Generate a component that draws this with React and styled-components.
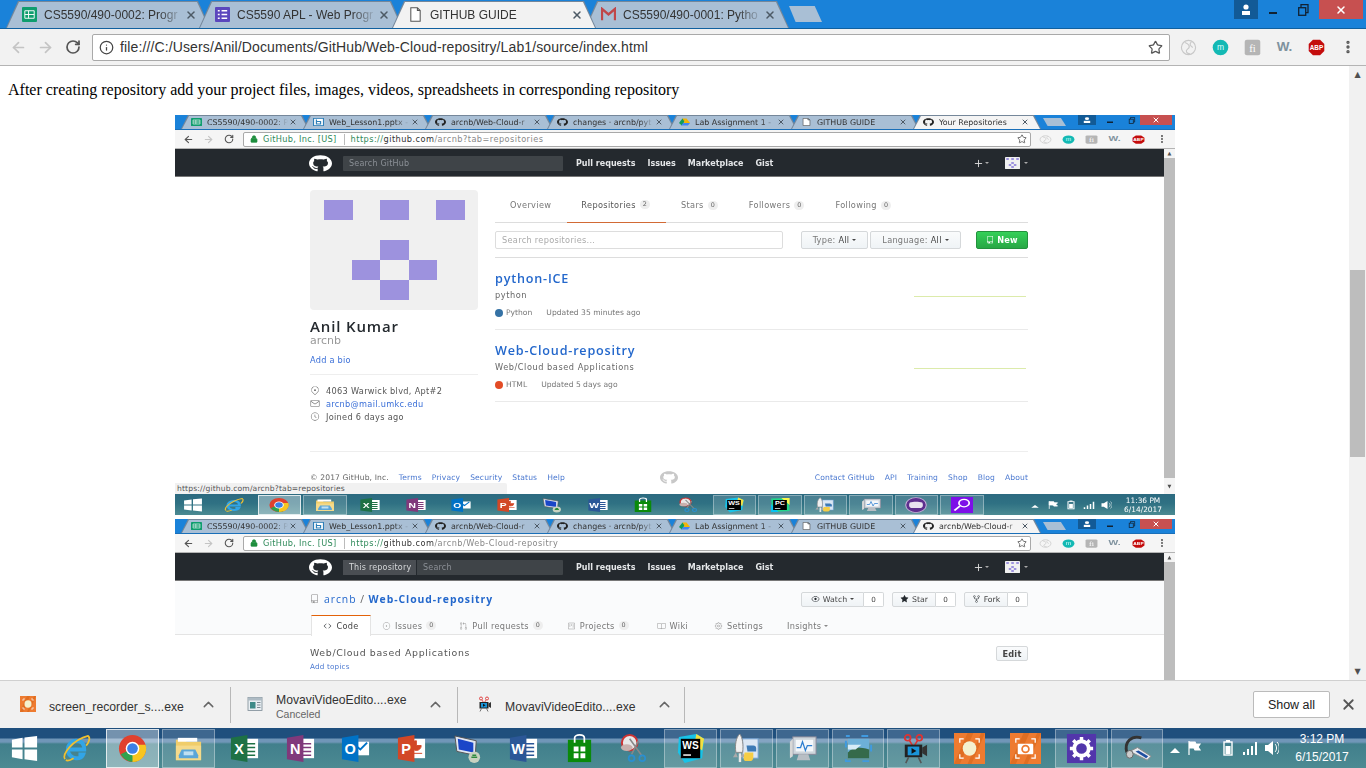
import React from "react";
import styled, { createGlobalStyle, css } from "styled-components";
import { ArrowLeft, ArrowRight, RotateCw, Info, Star, Lock, X, ChevronUp, EllipsisVertical, Plus } from "lucide-react";
import { FaGithub } from "react-icons/fa";
import {
  GoLocation, GoMail, GoClock, GoEye, GoStarFill, GoRepoForked, GoCode, GoIssueOpened,
  GoGitPullRequest, GoProject, GoBook, GoGear, GoRepo,
} from "react-icons/go";

const GlobalStyle = createGlobalStyle`
  html, body { margin: 0; padding: 0; background: #fff; overflow: hidden; }
  * { box-sizing: border-box; }
`;

const UI_FONT = `"Liberation Sans", Arial, sans-serif`;
const MINI_FONT = `"DejaVu Sans", "Open Sans", sans-serif`;

const Screen = styled.div`
  width: 1366px;
  height: 768px;
  display: flex;
  flex-direction: column;
  overflow: hidden;
  font-family: ${UI_FONT};
`;

/* ---------- browser chrome, shared by the real window and the two screenshots ---------- */

const TabStrip = styled.div`
  display: flex;
  align-items: flex-end;
  flex: none;
  background: #1a82d9;
  height: ${p => (p.$mini ? 15 : 29)}px;
  padding-left: 6px;
  border-bottom: 1px solid ${p => (p.$mini ? "#1a6fb8" : "#10609f")};
`;

const TabShape = styled.div`
  position: relative;
  flex: none;
  display: flex;
  align-items: center;
  width: ${p => (p.$mini ? 128 : 204)}px;
  height: ${p => (p.$mini ? 14 : 27)}px;
  margin-right: ${p => (p.$mini ? -6 : -11)}px;
  padding-left: ${p => (p.$mini ? 10 : 15)}px;
  background: #75879a;
  z-index: ${p => (p.$active ? 2 : 1)};
  clip-path: polygon(0 100%, ${p => (p.$mini ? 7 : 12)}px 0, calc(100% - ${p => (p.$mini ? 7 : 12)}px) 0, 100% 100%);
  &::before {
    content: "";
    position: absolute;
    inset: 1px 1px 0 1px;
    background: ${p => (p.$active ? (p.$mini ? "#f4f4f4" : "#f2f2f2") : "#a9bfd5")};
    clip-path: polygon(0 100%, ${p => (p.$mini ? 7 : 12)}px 0, calc(100% - ${p => (p.$mini ? 7 : 12)}px) 0, 100% 100%);
  }
  & > * { position: relative; }
`;

const TabIcon = styled.span`
  display: flex;
  justify-content: center;
  flex: none;
  width: ${p => (p.$mini ? 11 : 16)}px;
  margin-right: ${p => (p.$mini ? 5 : 7)}px;
`;

const TabTitle = styled.span`
  flex: none;
  width: ${p => (p.$mini ? 81 : 140)}px;
  white-space: nowrap;
  color: #333;
  font-family: ${p => (p.$mini ? MINI_FONT : UI_FONT)};
  font-size: ${p => (p.$mini ? 7.9 : 12)}px;
  -webkit-mask-image: linear-gradient(90deg, #000 82%, transparent 100%);
  mask-image: linear-gradient(90deg, #000 82%, transparent 100%);
`;

const TabClose = styled(X)`
  flex: none;
  color: #4d5a66;
  margin-left: ${p => (p.$mini ? 1 : 1)}px;
  stroke-width: 3;
`;

const NewTab = styled.div`
  flex: none;
  align-self: center;
  width: ${p => (p.$mini ? 23 : 33)}px;
  height: ${p => (p.$mini ? 8 : 16)}px;
  margin-left: ${p => (p.$mini ? 8 : 11)}px;
  background: #a9bfd5;
  clip-path: polygon(0 0, 78% 0, 100% 100%, 20% 100%);
`;

const WindowControls = styled.div`
  display: flex;
  align-self: flex-start;
  margin-left: auto;
  padding-right: 3px;
  height: ${p => (p.$mini ? 10 : 19)}px;
`;

const WinBtn = styled.div`
  display: flex;
  align-items: center;
  justify-content: center;
  width: ${p => p.$w}px;
  color: #fff;
  background: ${p => p.$bg || "transparent"};
`;

const Toolbar = styled.div`
  display: flex;
  align-items: center;
  flex: none;
  background: ${p => (p.$mini ? "#f5f5f5" : "#f2f2f2")};
  height: ${p => (p.$mini ? 19 : 37)}px;
  padding-left: ${p => (p.$mini ? 3 : 5)}px;
  border-bottom: 1px solid #b4b4b4;
`;

const NavBtn = styled.div`
  flex: none;
  display: flex;
  justify-content: center;
  width: ${p => (p.$mini ? 20.5 : 27)}px;
  color: ${p => (p.$off ? "#c4c4c4" : "#555")};
`;

const Omnibox = styled.div`
  display: flex;
  align-items: center;
  flex: none;
  background: #fff;
  border: 1px solid #a9a9a9;
  border-radius: 2px;
  width: ${p => (p.$mini ? 788 : 1078)}px;
  height: ${p => (p.$mini ? 15 : 27)}px;
  margin-left: ${p => (p.$mini ? 3.5 : 6)}px;
  margin-right: ${p => (p.$mini ? 2.4 : 2)}px;
  padding: 0 ${p => (p.$mini ? 3 : 6)}px 0 6px;
`;

const PageAddress = styled.span`
  margin-left: 6px;
  font-size: 14px;
  letter-spacing: .125px;
  color: #333;
`;

const SecureLabel = styled.span`
  font-family: ${MINI_FONT};
  font-size: 8.2px;
  letter-spacing: .3px;
  color: #2f8a5a;
  margin-left: 5px;
  padding-right: 7px;
  border-right: 1px solid #bbb;
  line-height: 11px;
`;

const MiniUrl = styled.span`
  font-family: ${MINI_FONT};
  font-size: 8.2px;
  letter-spacing: .45px;
  color: #888;
  margin-left: 6px;
  b { font-weight: 400; color: #333; }
  i { font-style: normal; color: #2f8a5a; }
`;

const OmniStar = styled(Star)`
  margin-left: auto;
  color: #555;
`;

const ExtSlot = styled.div`
  flex: none;
  display: flex;
  justify-content: center;
  width: ${p => (p.$mini ? 23.3 : 32)}px;
`;

const ExtIcon = styled.svg`
  display: block;
  width: ${p => (p.$mini ? 13 : 17)}px;
  height: ${p => (p.$mini ? 9 : 17)}px;
`;

const EXT_ICONS = [
  <g key="s" fill="none" stroke="#c8c8c8" strokeWidth="1.6"><circle cx="12" cy="12" r="10" /><path d="M7 5c6 2 8 6 4 9s-2 6 3 7M16 4c-3 3-2 5 2 8" /></g>,
  <g key="m"><circle cx="12" cy="12" r="11" fill="#13b9b4" /><text x="12" y="16" textAnchor="middle" fontSize="12" fill="#dff" fontFamily="Liberation Sans">m</text></g>,
  <g key="f"><rect x="1" y="1" width="22" height="22" rx="3" fill="#b5b5b5" /><text x="12" y="18" textAnchor="middle" fontSize="15" fill="#fff" fontFamily="Liberation Serif">fi</text></g>,
  <text key="w" x="12" y="17" textAnchor="middle" fontSize="19" fontWeight="700" fill="#7f929e" fontFamily="Liberation Sans">W.</text>,
  <g key="a"><polygon points="7,1 17,1 23,7 23,17 17,23 7,23 1,17 1,7" fill="#c40c0c" /><text x="12" y="15.5" textAnchor="middle" fontSize="9" fontWeight="700" fill="#fff" fontFamily="Liberation Sans">ABP</text></g>,
];

const Tab = ({ mini, active, icon, title }) => (
  <TabShape $mini={mini} $active={active}>
    <TabIcon $mini={mini}><TabGlyph name={icon} mini={mini} /></TabIcon>
    <TabTitle $mini={mini}>{title}</TabTitle>
    <TabClose $mini={mini} size={mini ? 8 : 12} />
  </TabShape>
);

const GlyphSvg = styled.svg`
  display: block;
  width: ${p => (p.$mini ? 11 : 15)}px;
  height: ${p => (p.$mini ? 8 : 15)}px;
`;

const TabGlyph = ({ name, mini }) => {
  if (name === "github") return <MiniMark $mini />;
  return (
    <GlyphSvg $mini={mini} viewBox="0 0 16 16" preserveAspectRatio="none">
      {name === "sheets" && <><rect width="16" height="16" rx="1" fill="#0f9d6e" /><path d="M3 4h10v8H3zM3 8h10M7 4v8" fill="none" stroke="#fff" /></>}
      {name === "forms" && <><rect width="16" height="16" rx="1" fill="#5b47bd" /><path d="M3 4h2M3 8h2M3 12h2M7 4h6M7 8h6M7 12h6" stroke="#fff" strokeWidth="1.6" /></>}
      {name === "doc" && <path d="M3 .8h7l3 3v11.4H3zM10 .8v3h3" fill="#fff" stroke="#555" strokeWidth="1.1" />}
      {name === "gmail" && <path d="M1 14V2l7 6 7-6v12" fill="none" stroke="#c0474a" strokeWidth="2.6" />}
      {name === "lesson" && <><rect x=".8" y=".8" width="14.4" height="14.4" fill="#fff" stroke="#2f7fb8" strokeWidth="1.6" /><path d="M5 3v9h6V7H5" fill="none" stroke="#2f7fb8" strokeWidth="1.8" /></>}
      {name === "drive" && <><polygon points="5,1 11,1 8,7 5,7" fill="#f4b400" /><polygon points="5,1 8,7 4,15 0,10" fill="#0f9d58" /><polygon points="11,1 16,10 7,10 8,7" fill="#f4b400" /><polygon points="3,15 6,10 16,10 13,15" fill="#4285f4" /></>}
    </GlyphSvg>
  );
};

const Chrome = ({ mini, tabs, address }) => (
  <>
    <TabStrip $mini={mini}>
      {tabs.map(t => <Tab key={t.title + t.icon} mini={mini} {...t} />)}
      <NewTab $mini={mini} />
      <WindowControls $mini={mini}>
        <WinBtn $w={mini ? 18 : 24} $bg="#125a96">
          <svg width={mini ? 8 : 10} height={mini ? 6 : 11} viewBox="0 0 10 11" preserveAspectRatio="none"><circle cx="5" cy="3" r="2.6" fill="#fff" /><rect x="1" y="7" width="8" height="4" fill="#fff" /></svg>
        </WinBtn>
        <WinBtn $w={mini ? 28 : 30}>
          <svg width={mini ? 6 : 8} height="10" viewBox="0 0 8 10"><rect y="7" width="8" height="2" fill="#123" /></svg>
        </WinBtn>
        <WinBtn $w={mini ? 16 : 31}>
          <svg width={mini ? 8 : 11} height={mini ? 7 : 12} viewBox="0 0 11 12" fill="none" stroke="#123" strokeWidth="1.3"><rect x=".7" y="3.7" width="7" height="7.6" /><path d="M3 3.5V.7h7v8H8" /></svg>
        </WinBtn>
        <WinBtn $w={mini ? 32 : 44} $bg="#c75050"><X size={mini ? 8 : 12} strokeWidth={3} /></WinBtn>
      </WindowControls>
    </TabStrip>
    <Toolbar $mini={mini}>
      <NavBtn $mini={mini} $off={!mini}><ArrowLeft size={mini ? 11 : 17} strokeWidth={2.4} /></NavBtn>
      <NavBtn $mini={mini} $off><ArrowRight size={mini ? 11 : 17} strokeWidth={2.4} /></NavBtn>
      <NavBtn $mini={mini}><RotateCw size={mini ? 10 : 16} strokeWidth={2.6} /></NavBtn>
      <Omnibox $mini={mini}>
        {address}
        <OmniStar size={mini ? 10 : 15} strokeWidth={2} />
      </Omnibox>
      {EXT_ICONS.map((icon, i) => (
        <ExtSlot key={i} $mini={mini}><ExtIcon $mini={mini} viewBox="0 0 24 24" preserveAspectRatio="none">{icon}</ExtIcon></ExtSlot>
      ))}
      <ExtSlot $mini={mini}><EllipsisVertical size={mini ? 10 : 16} color="#555" strokeWidth={3} /></ExtSlot>
    </Toolbar>
  </>
);

/* ---------- taskbar ---------- */

const Taskbar = styled.div`
  display: flex;
  align-items: center;
  flex: none;
  height: ${p => (p.$mini ? 21 : 40)}px;
  color: #fff;
  background: ${p => (p.$mini
    ? "linear-gradient(180deg, #2c6a80 0%, #2f7183 45%, #4b8a92 100%)"
    : "linear-gradient(180deg, #1f4f7d 0, #1f4f7d 10px, #7096b8 11px, #7096b8 14px, #417f8c 16px, #4c8a92 100%)")};
`;

const StartBtn = styled.div`
  flex: none;
  display: flex;
  justify-content: center;
  width: ${p => (p.$mini ? 36 : 49)}px;
`;

const Slot = styled.div`
  flex: none;
  display: flex;
  align-items: center;
  justify-content: center;
  width: ${p => (p.$mini ? 45.5 : 55.8)}px;
  height: ${p => (p.$mini ? 20 : 39)}px;
  ${p => p.$open && css`
    background: ${p.$active ? "rgba(255,255,255,.38)" : "rgba(255,255,255,.14)"};
    border: 1px solid rgba(255,255,255,${p.$active ? 0.75 : 0.35});
    margin: 0 ${p.$mini ? 1 : 1.5}px;
    width: ${p.$mini ? 43.5 : 52.8}px;
  `}
`;

const AppSvg = styled.svg`
  display: block;
  width: ${p => (p.$mini ? 22 : 31)}px;
  height: ${p => (p.$mini ? 16 : 31)}px;
`;

const Letter = ({ x = 10, y = 21, size = 15, fill = "#fff", children }) => (
  <text x={x} y={y} textAnchor="middle" fontSize={size} fontWeight="700" fill={fill} fontFamily="Liberation Sans">{children}</text>
);

const office = (color, letter) => (
  <>
    <rect x="13" y="6" width="17" height="20" fill="#fff" />
    <path d="M16 11h11M16 15h11M16 19h11M16 23h11" stroke={color} strokeWidth="1.6" />
    <polygon points="2,5 19,2 19,30 2,27" fill={color} />
    <Letter x={10.5} y={21.5}>{letter}</Letter>
  </>
);

const APP_ICONS = {
  windows: <path d="M3 7l11-2v10H3zM16 4.6 29 3v12H16zM3 17h11v10L3 25zM16 17h13v12l-13-1.8z" fill="#fff" />,
  ie: <><path d="M9 17h15c0-6-3-9-8-9s-9 4-9 9 4 9 9 9c3 0 6-1 7-4h-5" fill="none" stroke="#32a5e6" strokeWidth="4" /><path d="M4 27c-3-5 8-20 24-24 3 2 0 8-2 10M5 28c2 1 5 0 8-2" fill="none" stroke="#f0c030" strokeWidth="1.8" /></>,
  chrome: <><circle cx="16" cy="16" r="14" fill="#e0412f" /><path d="M16 16 4 22A14 14 0 0 0 22 28.600Z" fill="#2fa24f" /><path d="M16 16 16 30A14 14 0 0 0 29.500 12H16Z" fill="#f7c520" /><circle cx="16" cy="16" r="7" fill="#fff" /><circle cx="16" cy="16" r="5.500" fill="#3c7fe6" /></>,
  folder: <><path d="M3 7h9l2 2h15v19H3z" fill="#f0cd6a" /><rect x="5" y="5" width="20" height="4" fill="#fff" /><path d="M3 13h26v15H3z" fill="#f5da8a" /><path d="M9 17h14l3 6v3H6v-3z" fill="#5ba6d8" /><rect x="11" y="19" width="10" height="4" fill="#bfe0f2" /></>,
  excel: office("#1e7145", "X"),
  onenote: office("#80397b", "N"),
  outlook: <><rect x="13" y="9" width="17" height="14" fill="#fff" /><path d="M15 12l6 5 7-7" stroke="#0072c6" strokeWidth="2" fill="none" /><polygon points="2,5 19,2 19,30 2,27" fill="#0072c6" /><Letter x={10.5} y={21.5}>O</Letter></>,
  ppt: <><rect x="13" y="6" width="17" height="20" fill="#fff" /><path d="M21 8a5 5 0 1 0 5 5h-5zM16 21h11" fill="#d24726" stroke="#d24726" /><polygon points="2,5 19,2 19,30 2,27" fill="#d24726" /><Letter x={10.5} y={21.5}>P</Letter></>,
  remote: <><polygon points="3,3 25,8 24,23 5,19" fill="#dfe6f2" stroke="#555" /><polygon points="6,6 22,10 22,20 7,17" fill="#1a46c8" /><circle cx="23" cy="25" r="6" fill="#c8d2c0" /><path d="M20 25h6M21 23h4" stroke="#2e8b3d" strokeWidth="1.6" /></>,
  word: office("#2b5797", "W"),
  store: <><rect x="4" y="7" width="24" height="23" fill="#0a8a0a" /><path d="M11 10V5c0-4 10-4 10 0v5" fill="none" stroke="#fff" strokeWidth="1.8" /><path d="M10 14h5v5h-5zM17 14h5v5h-5zM10 21h5v5h-5zM17 21h5v5h-5z" fill="#fff" /></>,
  snip: <><circle cx="11" cy="10" r="8" fill="#e8e8e8" stroke="#c33" strokeWidth="2" /><ellipse cx="8" cy="15" rx="6" ry="3.500" fill="#c9b0ad" /><path d="M11 6l13 18M20 8 13 22" stroke="#888" strokeWidth="1.6" /><circle cx="24" cy="26" r="3" fill="none" stroke="#2a8fd0" strokeWidth="1.800" /><circle cx="13" cy="26" r="3" fill="none" stroke="#2a8fd0" strokeWidth="1.800" /></>,
  ws: <><polygon points="4,4 22,1 30,6 28,26 10,31 3,20" fill="#18c3e8" /><polygon points="22,1 30,6 28,18 20,12" fill="#f4e040" /><rect x="6" y="6" width="20" height="20" fill="#000" /><Letter x={16} y={17} size={10.500}>WS</Letter><rect x="8.500" y="22" width="8" height="1.500" fill="#fff" /></>,
  pc: <><polygon points="3,3 28,2 30,28 5,30" fill="#21d789" /><polygon points="18,2 30,2 30,16" fill="#fcf84a" /><polygon points="3,14 3,30 14,30" fill="#07c3f2" /><rect x="6" y="6" width="20" height="20" fill="#000" /><Letter x={16} y={17} size={10.500}>PC</Letter><rect x="8.500" y="22" width="8" height="1.500" fill="#fff" /></>,
  rocket: <><rect x="12" y="6" width="16" height="20" fill="#dbe7f4" stroke="#6f9fd0" /><path d="M9 1c-4 4-5 11-4 19h7c1-8 0-15-3-19z" fill="#f0f0f0" stroke="#888" /><path d="M5 20l-3 5h5zM12 20l3 5h-5z" fill="#aaa" /><rect x="8" y="21" width="2.500" height="9" fill="#e8e8e8" /><path d="M16 13h7a3 3 0 0 1 3 3v3h-9z" fill="#3d7ab5" /><path d="M14 20h9v5a4 4 0 0 1-4 4h-3a3 3 0 0 1-3-3z" fill="#f5cd45" /></>,
  perf: <><rect x="6" y="4" width="24" height="18" fill="#cfd6dc" stroke="#889" /><rect x="9" y="7" width="18" height="12" fill="#f4f7fa" /><path d="M10 15l4 0 2-6 3 9 2-5 5 0" fill="none" stroke="#2f7fd0" strokeWidth="1.300" /><path d="M3 9l3-3v18l-3 2z" fill="#d8d8d8" /><path d="M12 22h10l2 6H10z" fill="#b8bec4" /></>,
  photo: <><rect x="3" y="3" width="26" height="26" fill="none" stroke="#3f9ae0" strokeWidth="2" strokeDasharray="7 12" strokeDashoffset="3" /><rect x="5" y="6" width="22" height="20" fill="#6db0d8" /><path d="M5 20c6-6 10-6 22-3v9H5z" fill="#356a4a" /><path d="M5 12h14l-6 5H5z" fill="#d6ecf7" /></>,
  movavi: <><circle cx="10" cy="5" r="3" fill="none" stroke="#d33" strokeWidth="1.800" /><circle cx="22" cy="5" r="3" fill="none" stroke="#d33" strokeWidth="1.800" /><path d="M12 8l3 5M20 8l-3 5" stroke="#d33" strokeWidth="1.600" /><rect x="7" y="12" width="18" height="13" fill="#222" /><rect x="10" y="14" width="12" height="9" fill="#1a94d8" /><polygon points="14,15.500 19,18.500 14,21.500" fill="#111" /><polygon points="25,15 30,12 30,24 25,21" fill="#333" /><path d="M11 25l-3 6M21 25l3 6" stroke="#555" strokeWidth="1.600" /></>,
  recorder: <><rect x="0" y="0" width="32" height="32" fill="#ee7b30" /><path d="M0 32 14 0h6L6 32zM14 32 28 0h4L18 32z" fill="#e06e22" /><path d="M6 10V6h4M22 6h4v4M26 22v4h-4M10 26H6v-4" stroke="#fff" fill="none" strokeWidth="1.300" /><ellipse cx="16" cy="16" rx="7" ry="7.500" fill="#f4f1cf" /></>,
  camera: <><rect x="0" y="0" width="32" height="32" fill="#ee7b30" /><path d="M0 32 14 0h6L6 32zM14 32 28 0h4L18 32z" fill="#e06e22" /><path d="M6 10V6h4M22 6h4v4M26 22v4h-4M10 26H6v-4" stroke="#fff" fill="none" strokeWidth="1.300" /><rect x="8" y="11" width="16" height="11" rx="1" fill="#fff" /><circle cx="16" cy="16.500" r="3.500" fill="#fff" stroke="#ee7b30" strokeWidth="1.800" /></>,
  gear: <><rect x="1" y="1" width="30" height="30" fill="#5236ab" /><circle cx="16" cy="16" r="7.500" fill="none" stroke="#fff" strokeWidth="4" /><path d="M16 4v5M16 23v5M4 16h5M23 16h5M7.500 7.500l3.500 3.500M21 21l3.500 3.500M24.500 7.500 21 11M11 21l-3.500 3.500" stroke="#fff" strokeWidth="3.600" /></>,
  headset: <><path d="M5 20C2 9 10 2 20 5" fill="none" stroke="#333" strokeWidth="3" /><polygon points="8,19 16,15 30,24 26,28" fill="#e6e9ee" stroke="#888" /><polygon points="14,19 17,18 27,24 25,26" fill="#1f4fa0" /><ellipse cx="8" cy="22" rx="3.500" ry="4" fill="#ccc" stroke="#666" /></>,
  cat: <><ellipse cx="16" cy="16" rx="15" ry="15" fill="#5d2f8e" /><ellipse cx="16" cy="16" rx="15" ry="15" fill="none" stroke="#c6b3d8" strokeWidth="1.500" /><path d="M7 11c5-2 13-2 18 0 2 5 1 10-2 11H9c-3-1-4-6-2-11z" fill="#e8e2f0" /></>,
  search: <><rect width="32" height="32" fill="#7d10e8" /><circle cx="19" cy="12" r="7.500" fill="none" stroke="#fff" strokeWidth="2.500" /><path d="M13 18 5 27" stroke="#fff" strokeWidth="3" /></>,
  window: <><rect x="2" y="3" width="28" height="26" fill="#e8eef2" stroke="#7c8a94" strokeWidth="1.600" /><rect x="2" y="3" width="28" height="6" fill="#aebbc4" /><rect x="6" y="12" width="11" height="13" fill="#3d8a88" /><path d="M20 13h7M20 18h7M20 23h7" stroke="#7c8a94" strokeWidth="2" /></>,
};

const AppIcon = ({ name, mini }) => (
  <AppSvg $mini={mini} viewBox="0 0 32 32" preserveAspectRatio="none">{APP_ICONS[name]}</AppSvg>
);

const TrayBox = styled.div`
  display: flex;
  align-items: center;
  margin-left: auto;
  padding-right: 3px;
`;

const TrayItem = styled.div`
  flex: none;
  display: flex;
  justify-content: center;
  width: ${p => p.$w}px;
  margin-left: ${p => p.$gap || 0}px;
`;

const Clock = styled.div`
  flex: none;
  width: ${p => (p.$mini ? 58 : 82)}px;
  text-align: center;
  font-family: ${p => (p.$mini ? MINI_FONT : UI_FONT)};
  font-size: ${p => (p.$mini ? 7.4 : 12)}px;
  line-height: ${p => (p.$mini ? 9 : 18)}px;
  color: #fff;
`;

const TRAY = {
  arrow: <polygon points="3,14 8,9 13,14" fill="#fff" />,
  flag: <path d="M3 2v14M3 3h6l1 2h4l-2 3 2 3h-5l-1-2H3z" fill="#fff" stroke="#fff" strokeWidth="1.200" />,
  battery: <><rect x="4" y="3" width="8" height="13" fill="none" stroke="#fff" strokeWidth="1.400" /><rect x="6" y="1" width="4" height="2" fill="#fff" /><rect x="5.500" y="7" width="5" height="8" fill="#fff" /></>,
  signal: <path d="M1 13h2v3H1zM5 10h2v6H5zM9 7h2v9H9zM13 3h2v13h-2z" fill="#fff" />,
  speaker: <><path d="M2 6h3l5-4v14l-5-4H2z" fill="#fff" /><path d="M12 5c2 2 2 6 0 8M14 3c3 3 3 9 0 12" fill="none" stroke="#fff" strokeWidth="1" /></>,
};

const TrayIcon = styled.svg`
  display: block;
  width: ${p => (p.$mini ? 12 : 16)}px;
  height: ${p => (p.$mini ? 10 : 18)}px;
`;

const BIG_TRAY = [["arrow", 20], ["flag", 18], ["battery", 21, 14], ["signal", 23], ["speaker", 20]];
const MINI_TRAY = [["arrow", 18], ["flag", 18], ["battery", 18], ["signal", 17], ["speaker", 17]];

const WinTaskbar = ({ mini, apps, time, date }) => (
  <Taskbar $mini={mini}>
    <StartBtn $mini={mini}><AppIcon name="windows" mini={mini} /></StartBtn>
    {apps.map(a => (
      <Slot key={a.name} $mini={mini} $open={a.open} $active={a.active}><AppIcon name={a.name} mini={mini} /></Slot>
    ))}
    <TrayBox>
      {(mini ? MINI_TRAY : BIG_TRAY).map(([name, w, gap]) => (
        <TrayItem key={name} $w={w} $gap={gap}>
          <TrayIcon $mini={mini} viewBox="0 0 16 18" preserveAspectRatio="none">{TRAY[name]}</TrayIcon>
        </TrayItem>
      ))}
      <Clock $mini={mini}>{time}<br />{date}</Clock>
    </TrayBox>
  </Taskbar>
);

/* ---------- page of the outer browser ---------- */

const Main = styled.div`
  flex: 1;
  min-height: 0;
  display: flex;
  background: #fff;
`;

const Page = styled.div`
  flex: 1;
  min-width: 0;
  overflow: hidden;
  padding: 15px 0 0 8px;
`;

const Intro = styled.div`
  font-family: "Liberation Serif", "Times New Roman", serif;
  font-size: 16px;
  line-height: 18px;
  color: #000;
`;

const OuterScroll = styled.div`
  flex: none;
  position: relative;
  width: 17px;
  background: #f1f1f1;
  display: flex;
  flex-direction: column;
  align-items: center;
`;

const ScrollArrow = styled.div`
  flex: none;
  height: ${p => p.$h}px;
  display: flex;
  align-items: center;
  justify-content: center;
  color: #505050;
  font-size: ${p => p.$size}px;
  line-height: 1;
  font-family: "DejaVu Sans", sans-serif;
`;

const ScrollTrack = styled.div`
  flex: 1;
  width: 100%;
  min-height: 0;
  overflow: hidden;
  padding-top: ${p => p.$top}px;
`;

const ScrollThumb = styled.div`
  height: ${p => p.$h}px;
  margin: 0 auto;
  width: ${p => p.$w}px;
  background: #bdbdbd;
`;

const Shot = styled.div`
  display: flex;
  flex-direction: column;
  width: 1000px;
  margin-top: ${p => p.$top}px;
  margin-left: 167px;
  font-family: ${MINI_FONT};
  filter: blur(0.35px);
`;

const ShotBody = styled.div`
  display: flex;
  height: ${p => p.$h}px;
  flex: none;
`;

const Site = styled.div`
  position: relative;
  flex: 1;
  min-width: 0;
  overflow: hidden;
  background: #fff;
`;

const ShotScroll = styled.div`
  flex: none;
  width: 11px;
  background: #f4f4f4;
  display: flex;
  flex-direction: column;
`;

const GhNav = styled.div`
  display: flex;
  align-items: center;
  height: 28px;
  padding: 1px 136px 0 134px;
  background: #24292e;
  border-bottom: 1px solid #777;
`;

const MiniMark = styled(FaGithub).attrs({ preserveAspectRatio: "none" })`
  display: block;
  width: ${p => (p.$mini ? 11 : p.$foot ? 18 : 23)}px;
  height: ${p => (p.$mini ? 8 : p.$foot ? 13 : 17)}px;
  color: ${p => (p.$mini ? "#222" : p.$foot ? "#c8c8c8" : "#fff")};
`;

const SearchBox = styled.div`
  display: flex;
  height: 15px;
  width: 220px;
  margin-left: 11px;
  margin-right: 13px;
  background: #3f4448;
  border-radius: 1px;
  font-size: 8px;
  letter-spacing: .2px;
  line-height: 15px;
  color: #8b9096;
`;

const ScopeLabel = styled.div`
  flex: none;
  width: 74px;
  padding-left: 6px;
  white-space: nowrap;
  color: #d6d8da;
  background: #4a4e53;
  border-right: 1px solid #24292e;
`;

const SearchHint = styled.div`
  padding-left: 6px;
`;

const NavLink = styled.span`
  font-size: 8px;
  font-weight: 700;
  color: #e4e6e8;
  margin-right: 12px;
  white-space: nowrap;
`;

const NavRight = styled.div`
  margin-left: auto;
  display: flex;
  align-items: center;
  color: #ddd;
`;

const Caret = styled.span`
  display: inline-block;
  flex: none;
  margin-left: ${p => p.$gap ?? 3}px;
  border-left: 2.5px solid transparent;
  border-right: 2.5px solid transparent;
  border-top: 2.5px solid ${p => p.$color || "#aaa"};
  vertical-align: middle;
`;

const NavAvatar = styled.svg`
  display: block;
  width: 15px;
  height: 12px;
  margin-left: 16px;
`;

const Content = styled.div`
  display: flex;
  padding: 13px 0 0 135px;
`;

const Sidebar = styled.div`
  flex: none;
  width: 168px;
`;

const AvatarFrame = styled.svg`
  display: block;
  width: 168px;
  height: 120px;
`;

const FullName = styled.div`
  margin-top: 7px;
  font-size: 15px;
  line-height: 18px;
  font-weight: 600;
  color: #24292e;
  font-family: "Open Sans", sans-serif;
  letter-spacing: .85px;
`;

const Username = styled.div`
  font-size: 11px;
  line-height: 12px;
  color: #999;
`;

const BioLink = styled.a`
  display: block;
  margin-top: 7px;
  padding-bottom: 8px;
  font-size: 8.2px;
  letter-spacing: .25px;
  line-height: 12px;
  color: #3a6fd8;
  border-bottom: 1px solid #eee;
`;

const Details = styled.div`
  margin-top: 9px;
`;

const DetailRow = styled.div`
  display: flex;
  align-items: center;
  height: 13px;
  font-size: 8.2px;
  letter-spacing: .3px;
  color: #555;
  svg { flex: none; width: 10px; height: 9px; margin-right: 6px; color: #666; }
  a { color: #3a6fd8; }
`;

const Repos = styled.div`
  flex: none;
  width: 533px;
  margin-left: 17px;
`;

const ProfileTabs = styled.div`
  display: flex;
  height: 33px;
  border-bottom: 1px solid #ddd;
`;

const ProfileTab = styled.div`
  display: flex;
  align-items: center;
  height: 33px;
  padding: 0 ${p => p.$px || 0}px 3px ${p => p.$pl || 0}px;
  margin-left: ${p => p.$ml || 0}px;
  font-size: 8.2px;
  letter-spacing: .35px;
  color: ${p => (p.$active ? "#555" : "#777")};
  ${p => p.$active && "border-bottom: 1px solid #d26a35;"}
`;

const Count = styled.span`
  margin-left: 4px;
  padding: 0 3px;
  height: 9px;
  font-size: 6.4px;
  letter-spacing: 0;
  line-height: 9px;
  color: #666;
  background: #eeeeee;
  border-radius: 5px;
`;

const FilterRow = styled.div`
  display: flex;
  align-items: center;
  margin-top: 8px;
  padding-bottom: 8px;
  border-bottom: 1px solid #ddd;
  box-sizing: content-box;
  height: 18px;
`;

const FilterInput = styled.div`
  width: 288px;
  height: 18px;
  padding-left: 6px;
  font-size: 8.2px;
  letter-spacing: .3px;
  line-height: 17px;
  color: #aaa;
  border: 1px solid #ddd;
  border-radius: 2px;
`;

const GrayBtn = styled.div`
  display: flex;
  align-items: center;
  justify-content: center;
  flex: none;
  width: ${p => p.$w}px;
  height: 18px;
  margin-left: ${p => p.$ml || 0}px;
  font-size: 8.2px;
  letter-spacing: .25px;
  color: #777;
  background: linear-gradient(#fafbfc, #eff3f6);
  border: 1px solid #d5d8da;
  border-radius: 2px;
  b { font-weight: 400; color: #444; margin-left: 3px; }
`;

const GreenBtn = styled(GrayBtn)`
  color: #fff;
  font-weight: 700;
  background: linear-gradient(#34d058, #28a745);
  border-color: #23923d;
  svg { margin-right: 3px; }
`;

const RepoRow = styled.div`
  display: flex;
  justify-content: space-between;
  height: 72px;
  padding-top: 13px;
  border-bottom: 1px solid #eaeaea;
`;

const RepoName = styled.a`
  display: block;
  font-family: "Open Sans", sans-serif;
  font-size: 12.6px;
  line-height: 16px;
  font-weight: 600;
  letter-spacing: .8px;
  color: #2468cc;
`;

const RepoDesc = styled.div`
  margin-top: 2px;
  font-size: 8.2px;
  letter-spacing: .55px;
  line-height: 12px;
  color: #666;
`;

const RepoMeta = styled.div`
  display: flex;
  align-items: center;
  margin-top: 6px;
  height: 11px;
  font-size: 7.6px;
  color: #777;
`;

const LangDot = styled.span`
  width: 8px;
  height: 8px;
  border-radius: 50%;
  margin-right: 3px;
  background: ${p => p.$color};
`;

const Updated = styled.span`
  margin-left: ${p => p.$ml}px;
`;

const Spark = styled.div`
  flex: none;
  width: 112px;
  height: 1px;
  margin: 25px 2px 0 0;
  background: #dcebab;
`;

const Footer = styled.div`
  display: grid;
  grid-template-columns: 1fr auto 1fr;
  align-items: center;
  width: 718px;
  height: 44px;
  margin: 28px 0 0 135px;
  padding-top: 7px;
  border-top: 1px solid #eee;
  font-size: 7.6px;
  letter-spacing: .12px;
  color: #666;
`;

const FootLinks = styled.div`
  display: flex;
  white-space: nowrap;
  justify-content: ${p => (p.$end ? "flex-end" : "flex-start")};
  a { color: #4a78d0; margin-left: 10px; }
`;

const StatusBubble = styled.div`
  position: absolute;
  left: 0;
  bottom: 0;
  width: 332px;
  height: 11px;
  padding-left: 2px;
  font-size: 7.6px;
  letter-spacing: .15px;
  line-height: 11px;
  color: #555;
  background: #f1f1f1;
  border-top-right-radius: 2px;
`;

const RepoHead = styled.div`
  height: 54px;
  padding-left: 135px;
  padding-right: 136px;
  background: #fafbfc;
  border-bottom: 1px solid #e4e4e4;
`;

const RepoHeadTop = styled.div`
  display: flex;
  align-items: center;
  height: 34px;
  padding-top: 2px;
`;

const RepoCrumb = styled.div`
  font-family: "Open Sans", sans-serif;
  font-size: 10.4px;
  letter-spacing: .95px;
  color: #666;
  display: flex;
  align-items: center;
  svg { width: 9px; height: 10px; margin-right: 5px; color: #888; }
  a { color: #2468cc; }
  b { font-weight: 700; color: #2468cc; }
`;

const Social = styled.div`
  display: flex;
  margin-left: auto;
`;

const SocialGroup = styled.div`
  display: flex;
  height: 15px;
  margin-left: 8px;
`;

const SocialBtn = styled.div`
  display: flex;
  align-items: center;
  justify-content: center;
  width: ${p => p.$w}px;
  font-size: 7.8px;
  color: #444;
  background: linear-gradient(#fafbfc, #eff3f6);
  border: 1px solid #d5d8da;
  border-radius: 2px 0 0 2px;
  svg { margin-right: 3px; width: 9px; height: 8px; color: #24292e; }
`;

const SocialCount = styled.div`
  width: 20px;
  text-align: center;
  font-size: 7.2px;
  line-height: 13px;
  color: #444;
  background: #fff;
  border: 1px solid #d5d8da;
  border-left: 0;
  border-radius: 0 2px 2px 0;
`;

const RepoTabs = styled.div`
  display: flex;
  height: 21px;
  margin-left: 1px;
`;

const RepoTab = styled.div`
  display: flex;
  align-items: center;
  height: 21px;
  font-size: 8.2px;
  letter-spacing: .3px;
  margin-left: ${p => p.$ml || 0}px;
  color: #777;
  svg { width: 9px; height: 8px; margin-right: 4px; color: #999; }
  ${p => p.$active && css`
    width: 60px;
    justify-content: center;
    color: #444;
    background: #fff;
    border-top: 1px solid #e36209;
    border-left: 1px solid #e4e4e4;
    border-right: 1px solid #e4e4e4;
    svg { color: #24292e; }
  `}
`;

const RepoInfo = styled.div`
  display: flex;
  justify-content: space-between;
  padding: 11px 136px 0 135px;
`;

const RepoAbout = styled.div`
  font-size: 9.4px;
  letter-spacing: .65px;
  line-height: 13px;
  color: #555;
`;

const TopicLink = styled.a`
  display: block;
  margin-top: 2px;
  font-size: 7.2px;
  letter-spacing: .2px;
  line-height: 12px;
  color: #4a78d0;
`;

const EditBtn = styled(GrayBtn)`
  font-weight: 700;
  color: #444;
  height: 15px;
`;

/* ---------- downloads shelf ---------- */

const Shelf = styled.div`
  display: flex;
  align-items: center;
  flex: none;
  height: 48px;
  padding-right: 9px;
  background: #f1f1f1;
  border-top: 1px solid #d0d0d0;
`;

const DownloadItem = styled.div`
  display: flex;
  align-items: center;
  flex: none;
  width: ${p => p.$w}px;
  height: 36px;
  padding-left: ${p => p.$pl}px;
  border-right: 1px solid #b8b8b8;
`;

const DlIcon = styled.svg`
  flex: none;
  width: 16px;
  height: 16px;
  margin-right: 13px;
  margin-bottom: 2px;
`;

const DlText = styled.div`
  flex: none;
  width: 136px;
  margin-top: 5px;
  font-size: 12.2px;
  line-height: 14px;
  color: #333;
  white-space: nowrap;
`;

const DlStatus = styled.div`
  font-size: 10.5px;
  color: #666;
`;

const DlChevron = styled(ChevronUp)`
  flex: none;
  margin-left: 15px;
  color: #666;
`;

const ShowAll = styled.div`
  display: flex;
  align-items: center;
  justify-content: center;
  width: 77px;
  height: 27px;
  margin-left: auto;
  font-size: 12.5px;
  color: #222;
  background: #fff;
  border: 1px solid #bbb;
  border-radius: 2px;
`;

const ShelfClose = styled(X)`
  margin-left: 10px;
  color: #555;
`;

/* ---------- data ---------- */

const OUTER_TABS = [
  { icon: "sheets", title: "CS5590/490-0002: Progr" },
  { icon: "forms", title: "CS5590 APL - Web Progr" },
  { icon: "doc", title: "GITHUB GUIDE", active: true },
  { icon: "gmail", title: "CS5590/490-0001: Pytho" },
];

const miniTabs = last => [
  { icon: "sheets", title: "CS5590/490-0002: P" },
  { icon: "lesson", title: "Web_Lesson1.pptx -" },
  { icon: "github", title: "arcnb/Web-Cloud-r" },
  { icon: "github", title: "changes · arcnb/pyt" },
  { icon: "drive", title: "Lab Assignment 1 -" },
  { icon: "doc", title: "GITHUB GUIDE" },
  { icon: "github", title: last, active: true },
];

const MINI_APPS = [
  { name: "ie" }, { name: "chrome", open: true, active: true }, { name: "folder", open: true },
  { name: "excel" }, { name: "onenote" }, { name: "outlook" }, { name: "ppt" }, { name: "remote" },
  { name: "word" }, { name: "store" }, { name: "snip" }, { name: "ws", open: true }, { name: "pc", open: true },
  { name: "rocket", open: true }, { name: "perf", open: true }, { name: "cat", open: true }, { name: "search", open: true },
];

const BIG_APPS = [
  { name: "ie" }, { name: "chrome", open: true, active: true }, { name: "folder", open: true },
  { name: "excel" }, { name: "onenote" }, { name: "outlook" }, { name: "ppt" }, { name: "remote" },
  { name: "word" }, { name: "store" }, { name: "snip" }, { name: "ws", open: true }, { name: "rocket", open: true },
  { name: "perf", open: true }, { name: "photo", open: true }, { name: "movavi", open: true }, { name: "recorder" },
  { name: "camera" }, { name: "gear", open: true }, { name: "headset", open: true },
];

const SecureAddress = ({ path }) => (
  <>
    <Lock size={8} color="#1e8e3e" fill="#1e8e3e" />
    <SecureLabel>GitHub, Inc. [US]</SecureLabel>
    <MiniUrl><i>https://</i><b>github.com</b>{path}</MiniUrl>
  </>
);

const SiteNav = ({ scoped }) => (
  <GhNav>
    <MiniMark />
    <SearchBox>
      {scoped && <ScopeLabel>This repository</ScopeLabel>}
      <SearchHint>{scoped ? "Search" : "Search GitHub"}</SearchHint>
    </SearchBox>
    <NavLink>Pull requests</NavLink>
    <NavLink>Issues</NavLink>
    <NavLink>Marketplace</NavLink>
    <NavLink>Gist</NavLink>
    <NavRight>
      <Plus size={11} strokeWidth={2} />
      <Caret $gap={1} />
      <NavAvatar viewBox="0 0 168 120" preserveAspectRatio="none"><Identicon /></NavAvatar>
      <Caret $gap={4} />
    </NavRight>
  </GhNav>
);

const Identicon = () => (
  <>
    <rect width="168" height="120" rx="4" fill="#f0f0f0" />
    <g fill="#9d92de">
      <rect x="14" y="10" width="29" height="20" />
      <rect x="70" y="10" width="29" height="20" />
      <rect x="126" y="10" width="29" height="20" />
      <rect x="70" y="50" width="29" height="20" />
      <rect x="42" y="70" width="28" height="20" />
      <rect x="99" y="70" width="28" height="20" />
      <rect x="70" y="90" width="29" height="20" />
    </g>
  </>
);

const Repo = ({ name, desc, lang, color, updated, ml }) => (
  <RepoRow>
    <div>
      <RepoName>{name}</RepoName>
      <RepoDesc>{desc}</RepoDesc>
      <RepoMeta>
        <LangDot $color={color} />{lang}
        <Updated $ml={ml}>{updated}</Updated>
      </RepoMeta>
    </div>
    <Spark />
  </RepoRow>
);

const ProfilePage = () => (
  <>
    <SiteNav />
    <Content>
      <Sidebar>
        <AvatarFrame viewBox="0 0 168 120"><Identicon /></AvatarFrame>
        <FullName>Anil Kumar</FullName>
        <Username>arcnb</Username>
        <BioLink>Add a bio</BioLink>
        <Details>
          <DetailRow><GoLocation />4063 Warwick blvd, Apt#2</DetailRow>
          <DetailRow><GoMail /><a>arcnb@mail.umkc.edu</a></DetailRow>
          <DetailRow><GoClock />Joined 6 days ago</DetailRow>
        </Details>
      </Sidebar>
      <Repos>
        <ProfileTabs>
          <ProfileTab $pl={15}>Overview</ProfileTab>
          <ProfileTab $ml={16} $pl={14} $px={16} $active>Repositories<Count>2</Count></ProfileTab>
          <ProfileTab $ml={15}>Stars<Count>0</Count></ProfileTab>
          <ProfileTab $ml={31}>Followers<Count>0</Count></ProfileTab>
          <ProfileTab $ml={31}>Following<Count>0</Count></ProfileTab>
        </ProfileTabs>
        <FilterRow>
          <FilterInput>Search repositories...</FilterInput>
          <GrayBtn $w={67} $ml={18}>Type:<b>All</b><Caret $color="#444" /></GrayBtn>
          <GrayBtn $w={91} $ml={2}>Language:<b>All</b><Caret $color="#444" /></GrayBtn>
          <GreenBtn $w={52} $ml={15}><GoRepo size={8} />New</GreenBtn>
        </FilterRow>
        <Repo name="python-ICE" desc="python" lang="Python" color="#3572a5" updated="Updated 35 minutes ago" ml={14} />
        <Repo name="Web-Cloud-repositry" desc="Web/Cloud based Applications" lang="HTML" color="#e34c26" updated="Updated 5 days ago" ml={14} />
      </Repos>
    </Content>
    <Footer>
      <FootLinks>
        © 2017 GitHub, Inc.
        <a>Terms</a><a>Privacy</a><a>Security</a><a>Status</a><a>Help</a>
      </FootLinks>
      <MiniMark $foot />
      <FootLinks $end>
        <a>Contact GitHub</a><a>API</a><a>Training</a><a>Shop</a><a>Blog</a><a>About</a>
      </FootLinks>
    </Footer>
    <StatusBubble>https://github.com/arcnb?tab=repositories</StatusBubble>
  </>
);

const RepoPage = () => (
  <>
    <SiteNav scoped />
    <RepoHead>
      <RepoHeadTop>
        <RepoCrumb><GoRepo /><a>arcnb</a>&nbsp;/&nbsp;<b>Web-Cloud-repositry</b></RepoCrumb>
        <Social>
          <SocialGroup><SocialBtn $w={63}><GoEye />Watch<Caret $color="#444" /></SocialBtn><SocialCount>0</SocialCount></SocialGroup>
          <SocialGroup><SocialBtn $w={44}><GoStarFill />Star</SocialBtn><SocialCount>0</SocialCount></SocialGroup>
          <SocialGroup><SocialBtn $w={44}><GoRepoForked />Fork</SocialBtn><SocialCount>0</SocialCount></SocialGroup>
        </Social>
      </RepoHeadTop>
      <RepoTabs>
        <RepoTab $active><GoCode />Code</RepoTab>
        <RepoTab $ml={11}><GoIssueOpened />Issues<Count>0</Count></RepoTab>
        <RepoTab $ml={23}><GoGitPullRequest />Pull requests<Count>0</Count></RepoTab>
        <RepoTab $ml={24}><GoProject />Projects<Count>0</Count></RepoTab>
        <RepoTab $ml={28}><GoBook />Wiki</RepoTab>
        <RepoTab $ml={26}><GoGear />Settings</RepoTab>
        <RepoTab $ml={24}>Insights<Caret $color="#888" /></RepoTab>
      </RepoTabs>
    </RepoHead>
    <RepoInfo>
      <div>
        <RepoAbout>Web/Cloud based Applications</RepoAbout>
        <TopicLink>Add topics</TopicLink>
      </div>
      <EditBtn $w={32}>Edit</EditBtn>
    </RepoInfo>
  </>
);

const ShotScrollbar = ({ thumb, cut }) => (
  <ShotScroll>
    <ScrollArrow $h={9} $size={5}>▲</ScrollArrow>
    <ScrollTrack $top={0}><ScrollThumb $h={thumb} $w={11} /></ScrollTrack>
    {!cut && <ScrollArrow $h={16} $size={5}>▼</ScrollArrow>}
  </ShotScroll>
);

const App = () => (
  <Screen>
    <GlobalStyle />
    <Chrome
      tabs={OUTER_TABS}
      address={<><Info size={15} color="#444" /><PageAddress>file:///C:/Users/Anil/Documents/GitHub/Web-Cloud-repositry/Lab1/source/index.html</PageAddress></>}
    />
    <Main>
      <Page>
        <Intro>After creating repository add your project files, images, videos, spreadsheets in corresponding repository</Intro>
        <Shot $top={16}>
          <Chrome mini tabs={miniTabs("Your Repositories")} address={<SecureAddress path="/arcnb?tab=repositories" />} />
          <ShotBody $h={345}>
            <Site><ProfilePage /></Site>
            <ShotScrollbar thumb={320} />
          </ShotBody>
          <WinTaskbar mini apps={MINI_APPS} time="11:36 PM" date="6/14/2017" />
        </Shot>
        <Shot $top={4}>
          <Chrome mini tabs={miniTabs("arcnb/Web-Cloud-r")} address={<SecureAddress path="/arcnb/Web-Cloud-repositry" />} />
          <ShotBody $h={127}>
            <Site><RepoPage /></Site>
            <ShotScrollbar thumb={320} cut />
          </ShotBody>
        </Shot>
      </Page>
      <OuterScroll>
        <ScrollArrow $h={17} $size={8}>▲</ScrollArrow>
        <ScrollTrack $top={187}><ScrollThumb $h={187} $w={15} /></ScrollTrack>
        <ScrollArrow $h={17} $size={8}>▼</ScrollArrow>
      </OuterScroll>
    </Main>
    <Shelf>
      <DownloadItem $w={231} $pl={20}>
        <DlIcon viewBox="0 0 32 32">{APP_ICONS.recorder}</DlIcon>
        <DlText>screen_recorder_s....exe</DlText>
        <DlChevron size={17} />
      </DownloadItem>
      <DownloadItem $w={227} $pl={16}>
        <DlIcon viewBox="0 0 32 32">{APP_ICONS.window}</DlIcon>
        <DlText>MovaviVideoEdito....exe<DlStatus>Canceled</DlStatus></DlText>
        <DlChevron size={17} />
      </DownloadItem>
      <DownloadItem $w={227} $pl={18}>
        <DlIcon viewBox="0 0 32 32">{APP_ICONS.movavi}</DlIcon>
        <DlText>MovaviVideoEdito....exe</DlText>
        <DlChevron size={17} />
      </DownloadItem>
      <ShowAll>Show all</ShowAll>
      <ShelfClose size={17} strokeWidth={2.5} />
    </Shelf>
    <WinTaskbar apps={BIG_APPS} time="3:12 PM" date="6/15/2017" />
  </Screen>
);

export default App;
